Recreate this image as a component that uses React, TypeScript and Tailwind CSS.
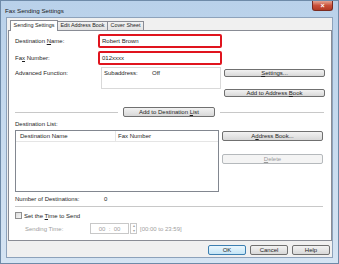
import React from "react";

const font = { fontFamily: '"Liberation Sans", Arial, sans-serif' };

function Btn({ w, label, disabled, primary, cls = "" }: { w: string; label: React.ReactNode; disabled?: boolean; primary?: boolean; cls?: string }) {
  const base = "flex items-center justify-center h-[10px] rounded-[2px] border text-[6px] leading-none whitespace-nowrap";
  const style = disabled
    ? "border-[#b5b9bc] bg-[#f4f4f4] text-[#9a9a9a]"
    : primary
    ? "border-[#3c7fb1] bg-gradient-to-b from-[#eaf6fd] to-[#c4e5f6] text-[#1e1e1e]"
    : "border-[#707070] bg-gradient-to-b from-[#f2f2f2] to-[#d8d8d8] text-[#1e1e1e]";
  return <div className={`${base} ${style} ${w} ${cls}`}>{label}</div>;
}

export default function App() {
  return (
    <div style={font} className="w-[339px] h-[264px] bg-gradient-to-b from-[#b9d1ea] to-[#d5e4f3] flex flex-col border border-[#6e8aa8] text-[#1e1e1e]">
      {/* title bar */}
      <div className="h-[16px] flex items-start pl-[4px] pr-[5px] relative">
        <div className="text-[6.2px] mt-[5px] text-[#1a1a1a] whitespace-nowrap">Fax Sending Settings</div>
        <div className="ml-auto mt-0 w-[21px] h-[10px] rounded-b-[3px] border border-[#7a2a20] border-t-0 bg-gradient-to-b from-[#e4a493] via-[#c9503a] to-[#b23a22] flex items-center justify-center text-white text-[7px] font-bold leading-none">
          ×
        </div>
      </div>
      {/* client */}
      <div className="mx-[5px] flex-1 mb-[5px] bg-[#f0f0f0] border border-[#8da2bb] flex flex-col">
        <div className="pl-[1px] pt-[2px]">
          {/* tabs */}
          <div className="flex items-end h-[10px] pl-[2px] text-[5.4px] leading-none whitespace-nowrap">
            <div className="h-[11px] -mb-[1px] bg-white border border-[#898c95] border-b-0 flex items-center justify-center z-10 w-[48px]">Sending Settings</div>
            <div className="h-[9px] bg-gradient-to-b from-[#f2f2f2] to-[#e3e3e3] border border-[#898c95] border-l-0 border-b-0 flex items-center justify-center w-[50px]">Edit Address Book</div>
            <div className="h-[9px] bg-gradient-to-b from-[#f2f2f2] to-[#e3e3e3] border border-[#898c95] border-l-0 border-b-0 flex items-center justify-center w-[36px]">Cover Sheet</div>
          </div>
          {/* panel */}
          <div className="w-[324px] h-[211px] bg-white border border-[#898c95] relative text-[6px] leading-none whitespace-nowrap">
            <div className="flex flex-col pl-[6px]">
              {/* dest name */}
              <div className="flex items-center mt-[3px] h-[14px]">
                <div className="w-[83px]">Destination <span className="underline">N</span>ame:</div>
                <div className="w-[124px] h-[14px] rounded-[2px] border-[2px] border-[#e0141e] flex items-center pl-[2px]">Robert Brown</div>
              </div>
              <div className="flex items-center mt-[3px] h-[14px]">
                <div className="w-[83px]">Fa<span className="underline">x</span> Number:</div>
                <div className="w-[124px] h-[14px] rounded-[2px] border-[2px] border-[#e0141e] flex items-center pl-[2px]">012xxxx</div>
              </div>
              <div className="flex mt-[2px] h-[22px]">
                <div className="w-[86px] mt-[3px]">Advanced Function:</div>
                <div className="w-[120px] h-[22px] border border-[#d9d9d9] flex pt-[2px] pl-[2px]">
                  <div className="w-[48px]">Subaddress:</div>
                  <div>Off</div>
                </div>
                <div className="ml-[3px] flex flex-col">
                  <Btn w="w-[101px]" cls="mt-[2px]" label={<span><span className="underline">S</span>ettings...</span>} />
                  <Btn w="w-[101px]" cls="mt-[12px]" label={<span>Add to Address <span className="underline">B</span>ook</span>} />
                </div>
              </div>
              {/* separator row */}
              <div className="flex items-center mt-[18px] h-[10px]">
                <div className="w-[103px] h-px bg-[#c8c8c8]" />
                <Btn w="w-[92px]" cls="ml-[5px]" label={<span>Add to Destination <span className="underline">L</span>ist</span>} />
                <div className="ml-[5px] w-[104px] h-px bg-[#c8c8c8]" />
              </div>
              <div className="mt-[4px]">Destination List:</div>
              <div className="flex mt-[3px]">
                <div className="w-[204px] h-[62px] border border-[#828790] flex flex-col">
                  <div className="h-[11px] flex items-center border-b border-[#e5e5e5] bg-white">
                    <div className="w-[100px] pl-[4px] border-r border-[#e5e5e5] h-full flex items-center">Destination Name</div>
                    <div className="pl-[2px]">Fax Number</div>
                  </div>
                </div>
                <div className="ml-[3px] flex flex-col">
                  <Btn w="w-[101px]" cls="mt-[1px]" label={<span>A<span className="underline">d</span>dress Book...</span>} />
                  <Btn w="w-[101px]" cls="mt-[13px]" disabled label={<span><span className="underline">D</span>elete</span>} />
                </div>
              </div>
              <div className="flex mt-[4px]">
                <div className="w-[89px]">Number of Destinations:</div>
                <div>0</div>
              </div>
              <div className="mt-[4px] w-[308px] h-px bg-[#c8c8c8]" />
              <div className="flex items-center mt-[5px]">
                <div className="w-[7px] h-[7px] border border-[#8f8f8f] bg-gradient-to-br from-[#dcdcdc] to-[#f6f6f6]" />
                <div className="ml-[2px]">Set the <span className="underline">T</span>ime to Send</div>
              </div>
              <div className="flex items-center mt-[4px] text-[#a0a0a0]">
                <div className="w-[75px] pl-[10px]">Sending Time:</div>
                <div className="w-[39px] h-[11px] border border-[#c8c8c8] flex items-center justify-center">00&nbsp;&nbsp;:&nbsp;&nbsp;00</div>
                <div className="ml-[1px] w-[7px] h-[11px] border border-[#c8c8c8] flex flex-col text-[4px] items-center justify-between">
                  <span>▴</span><span>▾</span>
                </div>
                <div className="ml-[3px]">[00:00 to 23:59]</div>
              </div>
            </div>
          </div>
        </div>
        {/* bottom buttons */}
        <div className="flex justify-end gap-[4px] mt-[4px] pr-[2px]">
          <Btn w="w-[38px]" primary label="OK" />
          <Btn w="w-[38px]" label="Cancel" />
          <Btn w="w-[38px]" label="Help" />
        </div>
      </div>
    </div>
  );
}
